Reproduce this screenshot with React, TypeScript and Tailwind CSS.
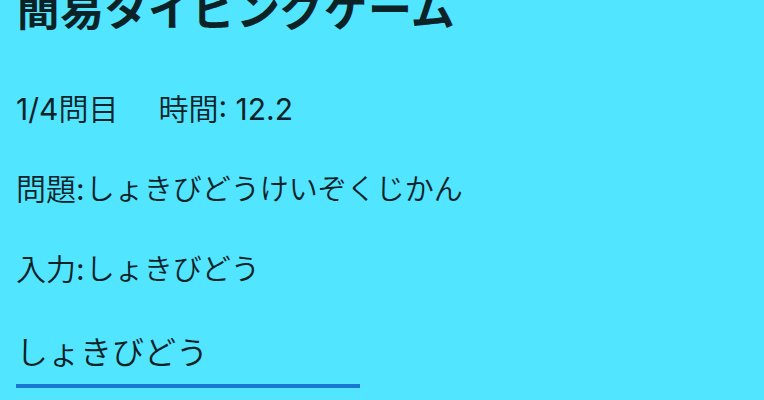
export default function App() {
  return (
    <main
      className="h-screen overflow-hidden bg-[#52e5ff] px-4 text-[30px] leading-10 font-[350] text-[#0b2227]"
      style={{ fontFamily: 'Inter, "Noto Sans CJK JP", sans-serif' }}
    >
      <h1 className="-mt-[22px] text-[44px] leading-16 font-bold">簡易タイピングゲーム</h1>
      <p className="mt-[47px] flex gap-10">
        <span><span className="font-normal">1/4</span>問目</span>
        <span>時間<span className="font-normal">: 12.2</span></span>
      </p>
      <p className="mt-10 flex h-10 items-baseline gap-px">
        <span>問題<span className="font-normal">:</span></span>
        <span className="text-[29px]">しょきびどうけいぞくじかん</span>
      </p>
      <p className="mt-10 flex h-10 items-baseline gap-px">
        <span>入力<span className="font-normal">:</span></span>
        <span className="text-[29px]">しょきびどう</span>
      </p>
      <input
        type="text"
        aria-label="入力"
        defaultValue="しょきびどう"
        className="mt-[31px] block h-17 w-[344px] border-b-4 border-[#1976d2] bg-transparent pb-1 text-[32px] outline-none"
      />
    </main>
  );
}
